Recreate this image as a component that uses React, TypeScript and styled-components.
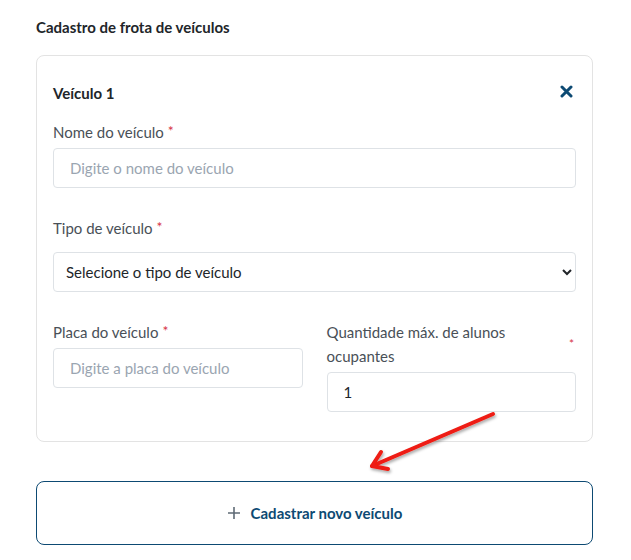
import React from 'react'
import styled, { createGlobalStyle } from 'styled-components'

const GlobalStyle = createGlobalStyle`
  body {
    margin: 0;
    background: #fff;
    font-family: 'Source Sans Pro', Lato, 'Liberation Sans', sans-serif;
    color: #212529;
  }
`

const blue = '#0d4a73'

const Page = styled.div`
  position: relative;
  padding: 15px 38px 15px 36px;
`

const Title = styled.h2`
  margin: 0 0 16px;
  font-size: 15px;
  line-height: 24px;
  font-weight: 700;
  color: #212529;
`

const Card = styled.div`
  border: 1px solid #e3e3e3;
  border-radius: 8px;
  padding: 25px 16px 29px;
`

const CardHeader = styled.div`
  display: flex;
  align-items: center;
  justify-content: space-between;
  height: 24px;
  margin-bottom: 15px;
`

const CardTitle = styled.span`
  font-size: 15px;
  font-weight: 700;
  color: #212529;
`

const CloseButton = styled.button`
  border: none;
  background: none;
  padding: 0;
  margin: -4px 3px 0 0;
  display: flex;
  cursor: pointer;
`

const Field = styled.div<{ $gap?: number }>`
  display: flex;
  flex-direction: column;
  gap: ${(p) => p.$gap ?? 4}px;
  margin-bottom: 28px;
`

const Label = styled.label`
  display: flex;
  justify-content: space-between;
  align-items: flex-start;
  font-size: 15px;
  line-height: 24px;
  color: #495057;
`

const Required = styled.span`
  color: #d63447;
  font-size: 14px;
  line-height: 0;
  margin-left: 4px;
  position: relative;
  top: -2px;
`

const LabelEnd = styled(Required)`
  font-size: 12px;
  margin: 26px 2px 0 0;
`

const Input = styled.input`
  box-sizing: border-box;
  width: 100%;
  height: 40px;
  border: 1px solid #dee2e6;
  border-radius: 4px;
  padding: 0 16px;
  font-family: inherit;
  font-size: 15px;
  color: #212529;
  outline: none;

  &::placeholder {
    color: #9aa5b1;
  }
`

const Select = styled.select`
  box-sizing: border-box;
  width: 100%;
  height: 40px;
  border: 1px solid #dee2e6;
  border-radius: 4px;
  padding: 0 8px 0 8px;
  font-family: inherit;
  font-size: 15px;
  color: #212529;
  background: #fff;
  outline: none;
`

const Row = styled.div`
  display: grid;
  grid-template-columns: 1fr 1fr;
  gap: 24px;
  align-items: start;

  & > div {
    margin-bottom: 0;
  }
`

const AddButton = styled.button`
  box-sizing: border-box;
  width: 100%;
  height: 64px;
  margin-top: 39px;
  display: flex;
  align-items: center;
  justify-content: center;
  gap: 10px;
  border: 1px solid ${blue};
  border-radius: 8px;
  background: #fff;
  font-family: inherit;
  font-size: 15px;
  font-weight: 700;
  color: ${blue};
  cursor: pointer;
`

const Pointer = styled.svg`
  position: absolute;
  left: 360px;
  top: 400px;
  overflow: visible;
  pointer-events: none;
`

const CloseIcon = () => (
  <svg width='13' height='13' viewBox='0 0 13 13'>
    <path d='M2 2 L11 11 M11 2 L2 11' stroke={blue} strokeWidth='3' strokeLinecap='round' />
  </svg>
)

const PlusIcon = () => (
  <svg width='14' height='14' viewBox='0 0 14 14'>
    <path d='M7 1 V13 M1 7 H13' stroke='#5f6b76' strokeWidth='1.6' />
  </svg>
)

const App = () => {
  return (
    <Page>
      <GlobalStyle />
      <Title>Cadastro de frota de veículos</Title>
      <Card>
        <CardHeader>
          <CardTitle>Veículo 1</CardTitle>
          <CloseButton aria-label='Remover veículo'><CloseIcon /></CloseButton>
        </CardHeader>

        <Field>
          <Label>
            <span>Nome do veículo<Required>*</Required></span>
          </Label>
          <Input placeholder='Digite o nome do veículo' />
        </Field>

        <Field $gap={12}>
          <Label>
            <span>Tipo de veículo<Required>*</Required></span>
          </Label>
          <Select defaultValue=''>
            <option value=''>Selecione o tipo de veículo</option>
          </Select>
        </Field>

        <Row>
          <Field>
            <Label>
              <span>Placa do veículo<Required>*</Required></span>
            </Label>
            <Input placeholder='Digite a placa do veículo' />
          </Field>
          <Field>
            <Label>
              <span>Quantidade máx. de alunos<br />ocupantes</span>
              <LabelEnd>*</LabelEnd>
            </Label>
            <Input defaultValue='1' />
          </Field>
        </Row>
      </Card>

      <AddButton>
        <PlusIcon />
        Cadastrar novo veículo
      </AddButton>

      <Pointer width='145' height='75' viewBox='0 0 145 75'>
        <defs>
          <filter id='shadow' x='-20%' y='-40%' width='140%' height='180%'>
            <feDropShadow dx='1' dy='2' stdDeviation='1.5' floodColor='#000' floodOpacity='0.35' />
          </filter>
        </defs>
        <g stroke='#ee1c12' strokeWidth='4' strokeLinecap='round' strokeLinejoin='round' fill='none' filter='url(#shadow)'>
          <path d='M133 14 L12 66' />
          <path d='M21 52 L12 66 L28 69' />
        </g>
      </Pointer>
    </Page>
  )
}

export default App
